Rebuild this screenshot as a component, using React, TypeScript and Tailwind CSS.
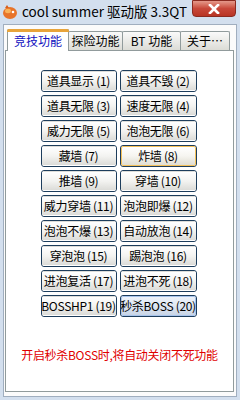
import React from 'react';

const font = { fontFamily: '"Noto Sans CJK SC", "Noto Sans", sans-serif' };

const buttons = [
  '道具显示 (1)', '道具不毁 (2)',
  '道具无限 (3)', '速度无限 (4)',
  '威力无限 (5)', '泡泡无限 (6)',
  '藏墙 (7)', '炸墙 (8)',
  '推墙 (9)', '穿墙 (10)',
  '威力穿墙 (11)', '泡泡即爆 (12)',
  '泡泡不爆 (13)', '自动放泡 (14)',
  '穿泡泡 (15)', '踢泡泡 (16)',
  '进泡复活 (17)', '进泡不死 (18)',
  'BOSSHP1 (19)', '秒杀BOSS (20)',
];

const tabs = ['探险功能', 'BT 功能', '关于…'];

const XpButton = ({ label, index }: { label: string; index: number }) => {
  // 8 is hovered (orange), 20 has focus (blue)
  let inner = 'border-transparent bg-gradient-to-b from-white via-[#f3f3f1] to-[#dcdcd8]';
  if (index === 7) inner = 'border-[#f5c15a] bg-gradient-to-b from-white via-[#f6f5f0] to-[#e0ddd2]';
  if (index === 19) inner = 'border-[#a8c4ec] bg-gradient-to-b from-[#eef3fa] via-[#dde6f2] to-[#c9d5e6]';
  return (
    <div className="h-[22px] rounded-[3px] border border-[#1d3d5c] overflow-hidden">
      <div
        className={`h-full border rounded-[2px] flex items-center justify-center text-[12px] text-black whitespace-nowrap tracking-[-0.3px] ${inner}`}
      >
        {label}
      </div>
    </div>
  );
};

export default function App() {
  return (
    <div className="w-[240px] h-[400px] bg-[#d3dfee] flex flex-col overflow-hidden" style={font}>
      {/* title bar */}
      <div className="h-[24px] flex items-start relative">
        <svg width="16" height="16" viewBox="0 0 16 16" className="mt-[4px] ml-[2px]">
          <ellipse cx="8" cy="9" rx="7" ry="6" fill="#e8742a" />
          <ellipse cx="6" cy="7" rx="3" ry="2.2" fill="#f9b35a" />
          <circle cx="11" cy="8" r="1.3" fill="#fff" />
          <path d="M3 4 L5 1 L7 4" fill="#d95f1c" />
        </svg>
        <span className="ml-[4px] mt-[3px] text-[13.5px] leading-[17px] text-black">cool summer 驱动版 3.3QT</span>
        <div className="absolute right-[4px] top-0 w-[44px] h-[17px] rounded-b-[4px] border border-[#8a2a20] bg-gradient-to-b from-[#e4988a] via-[#c8483a] to-[#b83424] flex items-center justify-center">
          <svg width="12" height="10" viewBox="0 0 12 10">
            <path d="M2 1 L10 9 M10 1 L2 9" stroke="#fff" strokeWidth="2.6" strokeLinecap="square" />
          </svg>
        </div>
      </div>

      {/* client */}
      <div className="flex-1 mx-[3px] mb-[3px] bg-[#fbfbfb] border border-[#a0aebf] flex flex-col px-[1px] pb-[4px]">
        {/* tab strip */}
        <div className="h-[23px] flex items-end pl-[2px] mt-[2px]">
          <div className="h-[22px] w-[62px] bg-white border border-b-0 border-[#919b9c] rounded-t-[2px] relative flex items-center justify-center text-[12px] text-[#1010c0] z-10 -mb-[1px]">
            <div className="absolute -top-[1px] -left-[1px] -right-[1px] h-[3px] bg-[#e8a43a] rounded-t-[2px]" />
            竞技功能
          </div>
          {tabs.map((t, i) => (
            <div
              key={t}
              className={`h-[19px] ${i === 0 ? 'w-[55px]' : i === 1 ? 'w-[59px]' : 'w-[50px]'} border border-b-0 border-[#919b9c] -ml-[1px] first:ml-0 bg-gradient-to-b from-[#fafafa] to-[#dcdcd6] flex items-center justify-center text-[12px] text-black rounded-t-[2px]`}
            >
              {t}
            </div>
          ))}
        </div>

        {/* panel */}
        <div className="flex-1 bg-white border border-[#919b9c] mr-[1px] flex flex-col items-center pt-[19px]">
          <div className="grid grid-cols-[76px_77px] gap-x-[3px] gap-y-[3px] mr-[2px]">
            {buttons.map((b, i) => (
              <XpButton key={b} label={b} index={i} />
            ))}
          </div>
          <p className="mt-[30px] text-[12px] leading-[16px] text-[#e00000] tracking-[-0.3px]">
            开启秒杀BOSS时,将自动关闭不死功能
          </p>
        </div>
      </div>
    </div>
  );
}
